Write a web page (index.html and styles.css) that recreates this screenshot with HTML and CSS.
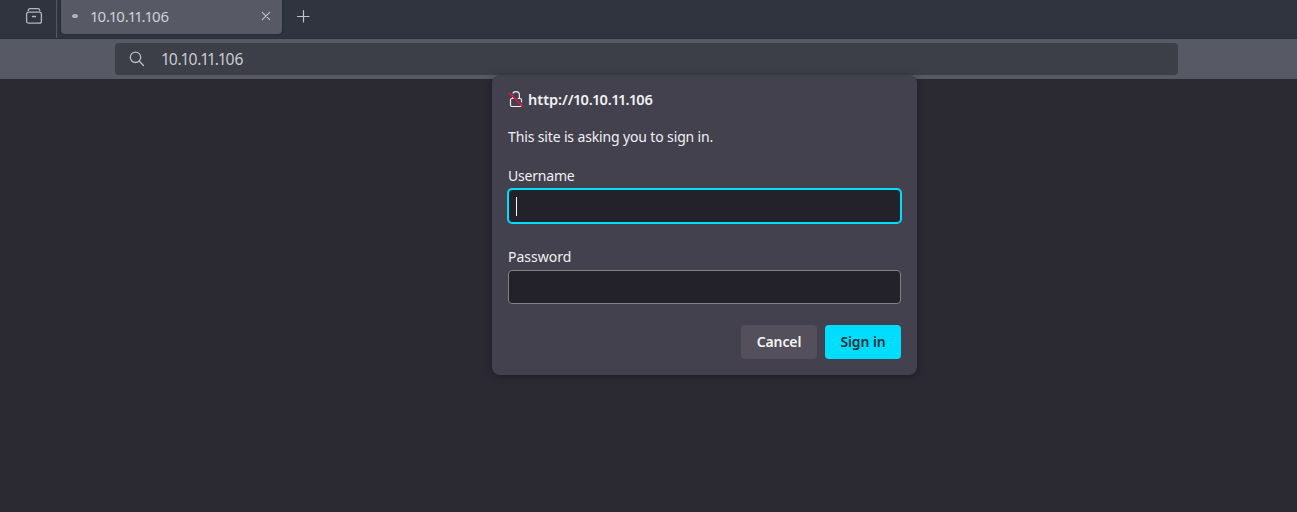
FILE: index.html
```html
<!DOCTYPE html>
<html lang="en">
<head>
<meta charset="utf-8">
<title>10.10.11.106</title>
<link rel="stylesheet" href="styles.css">
</head>
<body>
<div class="browser">
  <header class="tabbar">
    <div class="history">
      <svg width="18" height="18" viewBox="0 0 18 18" fill="none" stroke="#b3b7c2" stroke-width="1.3" stroke-linecap="round"><path d="M3.2 3.5C3.5 2 4.1 1.7 5.2 1.7h7.6c1.1 0 1.700.3 2 1.800"/><rect x="1.600" y="5.200" width="14.800" height="11" rx="2"/><path d="M7.500 9.500h3"/></svg>
    </div>
    <div class="tab">
      <span class="loading"></span>
      <span class="tab-title"><i>1</i>0.<i>1</i>0.<i>1</i><i>1</i>.<i>1</i>06</span>
      <svg width="10" height="10" viewBox="0 0 10 10" stroke="#c0c3cc" stroke-width="1.1" stroke-linecap="round"><path d="M1.300 1.300l7.400 7.400M8.700 1.300L1.300 8.700"/></svg>
    </div>
    <svg class="new-tab" width="14" height="14" viewBox="0 0 14 14" stroke="#c0c3cc" stroke-width="1.200" stroke-linecap="round"><path d="M7.500 1.500v11.500M1.500 7.500h11.500"/></svg>
  </header>
  <nav class="toolbar">
    <div class="urlbar">
      <svg width="16" height="16" viewBox="0 0 16 16" fill="none" stroke="#b9bdc6" stroke-width="1.300" stroke-linecap="round"><circle cx="6.500" cy="6.300" r="5.200"/><path d="M10.200 10l4.300 4.500"/></svg>
      <span class="url"><i>1</i>0.<i>1</i>0.<i>1</i><i>1</i>.<i>1</i>06</span>
    </div>
  </nav>
  <main class="page">
    <form class="dialog">
      <div class="origin">
        <svg width="16" height="18" viewBox="0 0 16 18" fill="none"><rect x="2.500" y="8.500" width="11" height="8" rx="1.500" stroke="#eeeef2" stroke-width="1.200"/><path d="M4.600 8.500V5a3.400 3.400 0 0 1 6.800 0v3.500" stroke="#eeeef2" stroke-width="1.200"/><path d="M2.400 2.400l13 13" stroke="#43414d" stroke-width="1.500"/><path d="M1 3l13.800 13.800" stroke="#f20d3f" stroke-width="1.500"/></svg>
        <strong class="host">http://<i>1</i>0.<i>1</i>0.<i>1</i><i>1</i>.<i>1</i>06</strong>
      </div>
      <p class="message">This site is asking you to sign in.</p>
      <label class="label user">Username</label>
      <div class="input focused"><span class="caret"></span></div>
      <label class="label pass">Password</label>
      <div class="input"></div>
      <div class="actions">
        <button type="button" class="button cancel">Cancel</button>
        <button type="button" class="button primary">Sign in</button>
      </div>
    </form>
  </main>
</div>
</body>
</html>
```
FILE: styles.css
```css
* { box-sizing: border-box; }
body { margin: 0; background: #2b2932; font-family: "Noto Sans", sans-serif; }
/* Narrow the digit 1, which is tabular by default */
i { font-style: normal; letter-spacing: -.075em; margin-left: -.07em; }
.browser { height: 512px; display: flex; flex-direction: column; overflow: hidden; }
.tabbar { height: 39px; flex: none; display: flex; background: #2f343f; border-bottom: 1px solid #292d37; }
.history { width: 57px; height: 38px; padding: 7px 0 0 25px; border-right: 1px solid #535763; }
.tab { width: 221px; height: 34px; margin-left: 4px; padding: 0 11px 2px; display: flex; align-items: center; background: #575964; border-radius: 0 0 4px 4px; box-shadow: 0 0 3px rgba(0,0,0,.4); }
.tab svg { margin-left: auto; }
.loading { width: 6px; height: 4px; border-radius: 50%; background: #aeb1ba; }
.tab-title { margin-left: 13px; font-size: 15px; letter-spacing: -.08px; color: #cfd1d7; white-space: nowrap; }
.new-tab { margin: 9px 0 0 14px; }
.toolbar { height: 40px; flex: none; padding: 4px 119px 4px 115px; background: #575964; }
.urlbar { height: 32px; display: flex; align-items: center; padding-left: 14px; background: #3c3f47; border-radius: 4px; }
.url { margin-left: 17px; font-size: 15.7px; letter-spacing: -.1px; color: #c8cbd2; }
.page { flex: 1; display: flex; align-items: flex-start; padding: 0 380px 0 492px; }
.dialog { width: 425px; height: 300px; margin: -4px 0 0; padding: 14px 16px 16px; display: flex; flex-direction: column; background: #43414d; border-radius: 8px; box-shadow: 0 1px 8px rgba(0,0,0,.3); color: #f1f0f4; font-size: 14px; z-index: 1; }
.origin { height: 22px; display: flex; align-items: center; gap: 4px; }
.origin svg { margin-top: -2px; }
.host { font-size: 14.6px; line-height: 20px; margin-top: -2px; font-weight: 600; letter-spacing: -.05px; }
.host i { letter-spacing: -.055em; margin-left: -.05em; }
.message { margin: 16px 0 0; height: 20px; line-height: 20px; letter-spacing: -.14px; }
.label { height: 20px; line-height: 20px; letter-spacing: -.2px; }
.user { margin-top: 19px; }
.pass { margin-top: 24px; letter-spacing: 0; }
.input { height: 34px; margin-top: 3px; background: #23212a; border: 1px solid #817f88; border-radius: 4px; }
.focused { padding: 7px 0 0 7px; border-color: #00ddff; box-shadow: 0 0 0 1px #00ddff; }
.caret { display: block; width: 1px; height: 19px; background: #f5f5f7; }
.actions { margin-top: 21px; display: flex; justify-content: flex-end; gap: 8px; }
.button { width: 76px; height: 34px; padding: 0 0 2px; border: 0; border-radius: 4px; font: 600 14px "Noto Sans", sans-serif; letter-spacing: -.1px; }
.cancel { background: #53505b; color: #f4f3f6; }
.primary { background: #00ddff; color: #23303c; }
```
